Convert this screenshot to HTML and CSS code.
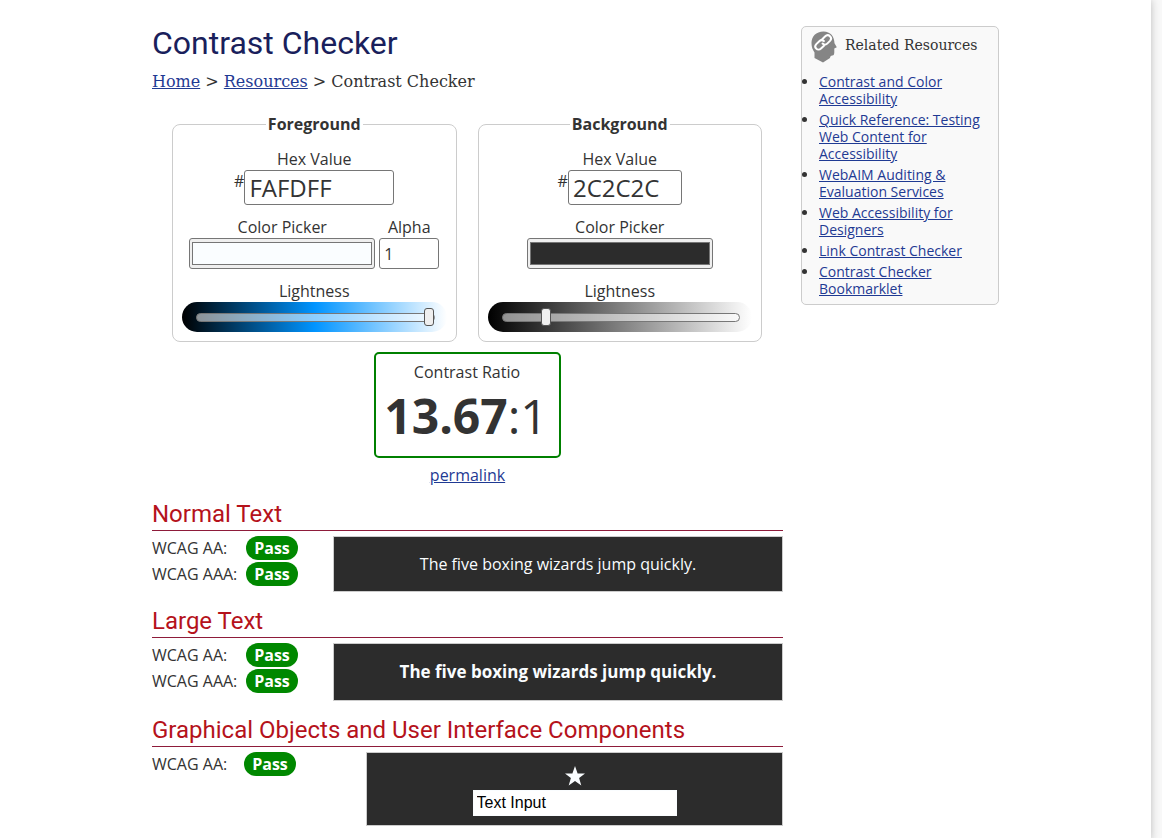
FILE: index.html
```html
<!DOCTYPE html>
<html lang="en">
<head>
<meta charset="utf-8">
<title>Contrast Checker</title>
<link rel="stylesheet" href="styles.css">
</head>
<body>
<div class="page">
  <div class="columns">
    <main class="main">
      <h1 class="title">Contrast Checker</h1>
      <nav class="crumbs"><a href="#home">Home</a> &gt; <a href="#resources">Resources</a> &gt; Contrast Checker</nav>

      <form class="checker">
        <div class="pickers">
          <fieldset class="panel">
            <legend>Foreground</legend>
            <div class="field">
              <label for="fhex">Hex Value</label>
              <div class="hex-row"><span class="hash">#</span><input class="hex hex-wide" id="fhex" type="text" value="FAFDFF"></div>
            </div>
            <div class="field-row">
              <div class="field">
                <label for="fpick">Color Picker</label>
                <input class="swatch" id="fpick" type="color" value="#fafdff">
              </div>
              <div class="field">
                <label for="falpha">Alpha</label>
                <input class="alpha" id="falpha" type="text" value="1">
              </div>
            </div>
            <div class="field">
              <label for="flight">Lightness</label>
              <input class="light light-blue" id="flight" type="range" min="0" max="100" value="100">
            </div>
          </fieldset>
          <fieldset class="panel">
            <legend>Background</legend>
            <div class="field">
              <label for="bhex">Hex Value</label>
              <div class="hex-row"><span class="hash">#</span><input class="hex" id="bhex" type="text" value="2C2C2C"></div>
            </div>
            <div class="field-row">
              <div class="field">
                <label for="bpick">Color Picker</label>
                <input class="swatch" id="bpick" type="color" value="#2c2c2c">
              </div>
            </div>
            <div class="field">
              <label for="blight">Lightness</label>
              <input class="light light-gray" id="blight" type="range" min="0" max="100" value="17">
            </div>
          </fieldset>
        </div>
        <div class="ratio">
          <div class="ratio-label">Contrast Ratio</div>
          <div class="ratio-value"><b>13.67</b>:1</div>
        </div>
        <a class="permalink" href="#permalink">permalink</a>
      </form>

      <section class="result">
        <h2>Normal Text</h2>
        <div class="result-row">
          <dl class="scores">
            <dt>WCAG AA:</dt><dd>Pass</dd>
            <dt>WCAG AAA:</dt><dd>Pass</dd>
          </dl>
          <div class="sample">The five boxing wizards jump quickly.</div>
        </div>
      </section>
      <section class="result">
        <h2>Large Text</h2>
        <div class="result-row">
          <dl class="scores">
            <dt>WCAG AA:</dt><dd>Pass</dd>
            <dt>WCAG AAA:</dt><dd>Pass</dd>
          </dl>
          <div class="sample sample-large">The five boxing wizards jump quickly.</div>
        </div>
      </section>
      <section class="result">
        <h2>Graphical Objects and User Interface Components</h2>
        <div class="result-row">
          <dl class="scores scores-wide">
            <dt>WCAG AA:</dt><dd>Pass</dd>
          </dl>
          <div class="sample sample-ui">
            <svg class="star" viewBox="0 0 20 20" aria-hidden="true"><path d="M10 0l2.6 7.4 7.4.1-5.900 4.500 2.200 7.500L10 15.100l-6.300 4.400 2.200-7.500L0 7.500l7.400-.1z" fill="#fafdff"/></svg>
            <input class="sample-input" type="text" value="Text Input" aria-label="Text Input">
          </div>
        </div>
      </section>
    </main>

    <aside class="related">
      <div class="related-head">
        <svg class="head-icon" viewBox="0 0 26 32" aria-hidden="true">
          <path d="M12.500 0.500C5 0.500 0.500 5.500 0.500 12c0 4 1 6.500 3 9.500v5.500l8.500 4.500 7-4.500c.2-1.500.8-2.500 2.300-2.500 1.700-.2 2-1.500 2-3.500v-3.500l2.500-1.200-2.300-4C23.300 5.500 19.500.500 12.500.500z" fill="#858585"/>
          <g fill="none" stroke="#fff" stroke-width="2" stroke-linecap="round">
            <path d="M11 8.500l3-3c1.500-1.500 3.500-1.700 5-.3s1.300 3.300 0 4.700l-2.800 2.700c-1.400 1.300-3.300 1.300-4.700 0"/>
            <path d="M13 14.800l-3 2.800c-1.400 1.300-3.500 1.400-4.800 0s-1.200-3.200.1-4.500l3-2.900c1.400-1.300 3.300-1.300 4.600-.1"/>
          </g>
        </svg>
        <h2 class="related-title">Related Resources</h2>
      </div>
      <ul class="related-list">
        <li><a href="#r1">Contrast and Color Accessibility</a></li>
        <li><a href="#r2">Quick Reference: Testing Web Content for Accessibility</a></li>
        <li><a href="#r3">WebAIM Auditing &amp; Evaluation Services</a></li>
        <li><a href="#r4">Web Accessibility for Designers</a></li>
        <li><a href="#r5">Link Contrast Checker</a></li>
        <li><a href="#r6">Contrast Checker Bookmarklet</a></li>
      </ul>
    </aside>
  </div>
</div>
</body>
</html>
```

FILE: styles.css
```css
* { box-sizing: border-box; }
body {
  margin: 0;
  background: #f8f8f8;
  color: #333;
  font: 16px/24px "Open Sans", sans-serif;
  overflow: hidden;
}
a { color: #1f3a93; }
.page {
  min-height: 100vh;
  margin-right: 11px;
  padding: 26px 0 14px;
  background: #fff;
  box-shadow: 0 0 8px #bbb;
}
.columns {
  display: flex;
  align-items: flex-start;
  gap: 18px;
  max-width: 847px;
  margin: 0 auto;
}
.main { flex: 1; min-width: 0; }
.title {
  margin: 0;
  color: #1a1f5c;
  font: 400 32px/34px Roboto, sans-serif;
}
.crumbs {
  margin-top: 10px;
  font-family: "DejaVu Serif", serif;
  font-size: 16px;
}
.checker { display: flex; flex-direction: column; align-items: center; }
.pickers {
  display: flex;
  gap: 21px;
  align-self: stretch;
  margin-top: 18px;
  padding: 0 21px 0 20px;
}
.panel {
  flex: 1;
  min-width: 0;
  display: flex;
  flex-direction: column;
  gap: 11px;
  margin: 0;
  padding: 12px 9px 9px;
  border: 1px solid #ccc;
  border-radius: 8px;
}
.panel legend { margin: 0 auto; padding: 0 2px; font-weight: 700; }
.field { display: flex; flex-direction: column; align-items: center; }
.field label { line-height: 22px; }
.field-row { display: flex; justify-content: center; gap: 4px; }
.hex-row { display: flex; }
.hash { line-height: 22px; }
.hex, .alpha {
  border: 1px solid #767676;
  border-radius: 3px;
  background: #fff;
  color: #333;
  font-family: "Open Sans", sans-serif;
}
.hex { width: 114px; height: 35px; padding: 0 4px; font-size: 24px; }
.hex-wide { width: 150px; }
.alpha { width: 60px; height: 31px; padding: 0 4px; font-size: 16px; }
.swatch {
  appearance: none;
  width: 186px;
  height: 31px;
  padding: 3px 2px;
  border: 1px solid #767676;
  border-radius: 3px;
  background: #efefef;
}
.swatch::-webkit-color-swatch-wrapper { padding: 0; }
.swatch::-webkit-color-swatch { border: 1px solid #767676; border-radius: 0; }
.light {
  appearance: none;
  width: 100%;
  height: 30px;
  margin: 0;
  padding: 0 12px 0 14px;
  border-radius: 15px;
}
.light-blue { background: linear-gradient(to right, #000, #0094ff 50%, #fff); }
.light-gray { background: linear-gradient(to right, #000, #fff); }
.light::-webkit-slider-runnable-track {
  height: 9px;
  border: 1px solid #777;
  border-radius: 5px;
  background: rgba(255, 255, 255, .55);
}
.light::-webkit-slider-thumb {
  appearance: none;
  width: 10px;
  height: 18px;
  margin-top: -6px;
  border: 1px solid #555;
  border-radius: 3px;
  background: #efefef;
}
.ratio {
  margin-top: 10px;
  padding: 6px 11px 8px 8px;
  border: 2px solid #008000;
  border-radius: 5px;
  text-align: center;
}
.ratio-label { margin-left: 2px; }
.ratio-value { font-size: 48px; line-height: 64px; }
.permalink { margin-top: 5px; }
.result { margin-top: 15px; }
.checker + .result { margin-top: 13px; }
.result h2 {
  margin: 0 0 5px;
  padding-bottom: 2px;
  border-bottom: 1px solid #8e1b3a;
  color: #b5121b;
  font: 400 24px/28px Roboto, sans-serif;
}
.result-row { display: flex; }
.scores {
  flex: none;
  display: grid;
  grid-template-columns: 94px 52px;
  grid-auto-rows: 24px;
  row-gap: 2px;
  width: 181px;
  margin: 0;
}
.scores-wide { grid-template-columns: 92px 52px; width: 214px; }
.scores dt { white-space: nowrap; }
.scores dd {
  margin: 0;
  border-radius: 12px;
  background: #008800;
  color: #fff;
  font-weight: 700;
  text-align: center;
}
.sample {
  flex: 1;
  padding: 15px;
  border: 1px solid #ccc;
  background: #2c2c2c;
  color: #fafdff;
  text-align: center;
}
.sample-large { padding: 16px; font-size: 17px; font-weight: 700; }
.sample-ui { display: flex; flex-direction: column; align-items: center; gap: 4px; padding: 13px 8px 9px; }
.star { width: 20px; height: 20px; }
.sample-input {
  width: 204px;
  height: 26px;
  padding: 0 3px;
  border: 1px solid #fafdff;
  background: #fff;
  color: #000;
  font: 16px "Liberation Sans", sans-serif;
}
.related {
  flex: none;
  width: 198px;
  padding: 4px 9px 7px;
  border: 1px solid #ccc;
  border-radius: 5px;
  background: #f9f9f9;
}
.related-head { display: flex; gap: 8px; }
.head-icon { width: 26px; height: 32px; }
.related-title {
  margin: 2px 0 0;
  font: 400 14px/24px "DejaVu Serif", serif;
  white-space: nowrap;
}
.related-list {
  margin: 10px 0 0;
  padding-left: 8px;
  font-size: 14px;
  line-height: 17px;
}
.related-list li + li { margin-top: 4px; }
```
